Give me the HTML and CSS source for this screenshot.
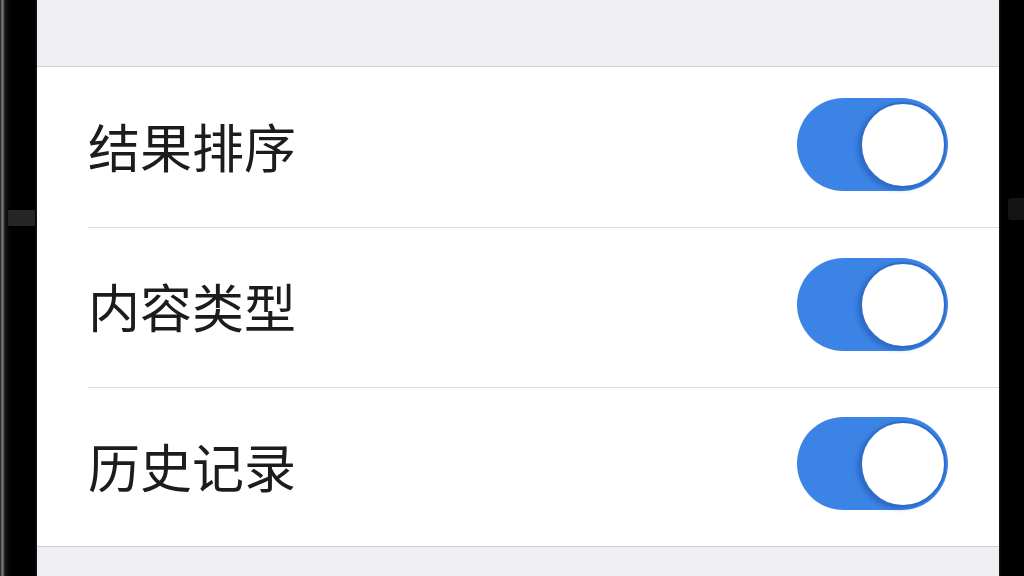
FILE: index.html
```html
<!DOCTYPE html>
<html lang="zh-CN">
<head>
    <meta charset="UTF-8" />
    <meta name="viewport" content="width=device-width, initial-scale=1.0"/>
    <title>设置</title>
    <link rel="stylesheet" href="styles.css">
</head>
<body>
<div class="device">
    <div class="bezel bezel-left"><span class="side-btn"></span></div>

    <div class="screen">
        <div class="group-gap top"></div>

        <ul class="settings">
            <li class="row">
                <span class="label">结果排序</span>
                <label class="switch">
                    <input type="checkbox" checked />
                    <span class="track"><span class="knob"></span></span>
                </label>
            </li>
            <li class="row">
                <span class="label">内容类型</span>
                <label class="switch">
                    <input type="checkbox" checked />
                    <span class="track"><span class="knob"></span></span>
                </label>
            </li>
            <li class="row">
                <span class="label">历史记录</span>
                <label class="switch">
                    <input type="checkbox" checked />
                    <span class="track"><span class="knob"></span></span>
                </label>
            </li>
        </ul>

        <div class="group-gap bottom"></div>
    </div>

    <div class="bezel bezel-right"><span class="side-btn"></span></div>
</div>
</body>
</html>
```

FILE: styles.css
```css
html, body {
    margin: 0;
    padding: 0;
    height: 100%;
    background: #000;
    overflow: hidden;
}

body {
    font-family: "Noto Sans CJK SC", "Noto Sans", sans-serif;
}

.device {
    display: flex;
    height: 576px;
}

.bezel {
    position: relative;
    background: #000;
}

.bezel-left {
    width: 37px;
    background: linear-gradient(to right, #3a3a3a 0, #2a2a2a 1px, #8a8a8a 2px, #6a6a6a 3px, #161616 5px, #050505 9px, #000 12px, #000 35px, #1a1a1a 37px);
}

.bezel-right {
    width: 25px;
    background: linear-gradient(to right, #1a1a1a 0, #000 2px, #000 100%);
}

.side-btn {
    position: absolute;
}

.bezel-left .side-btn {
    left: 8px;
    top: 210px;
    width: 27px;
    height: 16px;
    background: #262626;
}

.bezel-right .side-btn {
    left: 9px;
    top: 198px;
    width: 16px;
    height: 22px;
    border-radius: 3px 0 0 3px;
    background: #141414;
}

.screen {
    flex: 1;
    display: flex;
    flex-direction: column;
    background: #efeef3;
}

.group-gap.top {
    height: 66px;
    border-bottom: 1px solid #d2d2d6;
}

.group-gap.bottom {
    flex: 1;
    border-top: 1px solid #cfcfd3;
}

.settings {
    list-style: none;
    margin: 0;
    padding: 0;
    background: #fff;
}

.row {
    position: relative;
    display: flex;
    align-items: center;
    justify-content: space-between;
    height: 160px;
    padding: 0 51px;
    box-sizing: border-box;
}

.row + .row::before {
    content: "";
    position: absolute;
    left: 51px;
    right: 0;
    top: 0;
    height: 1px;
    background: #dcdce0;
}

.row:last-child {
    height: 159px;
}

.label {
    font-size: 52px;
    line-height: 1;
    color: #1c1c1e;
    margin-top: -2px;
}

.switch input {
    display: none;
}

.track {
    display: block;
    position: relative;
    width: 151px;
    height: 93px;
    border-radius: 47px;
    background: #3b84e6;
    margin-top: -6px;
}

.knob {
    position: absolute;
    top: 4px;
    right: 2px;
    width: 82px;
    height: 82px;
    border-radius: 50%;
    background: #fff;
    border: 2px solid #2d6cc9;
    box-shadow: -3px 2px 4px rgba(20, 60, 140, 0.35);
}
```
